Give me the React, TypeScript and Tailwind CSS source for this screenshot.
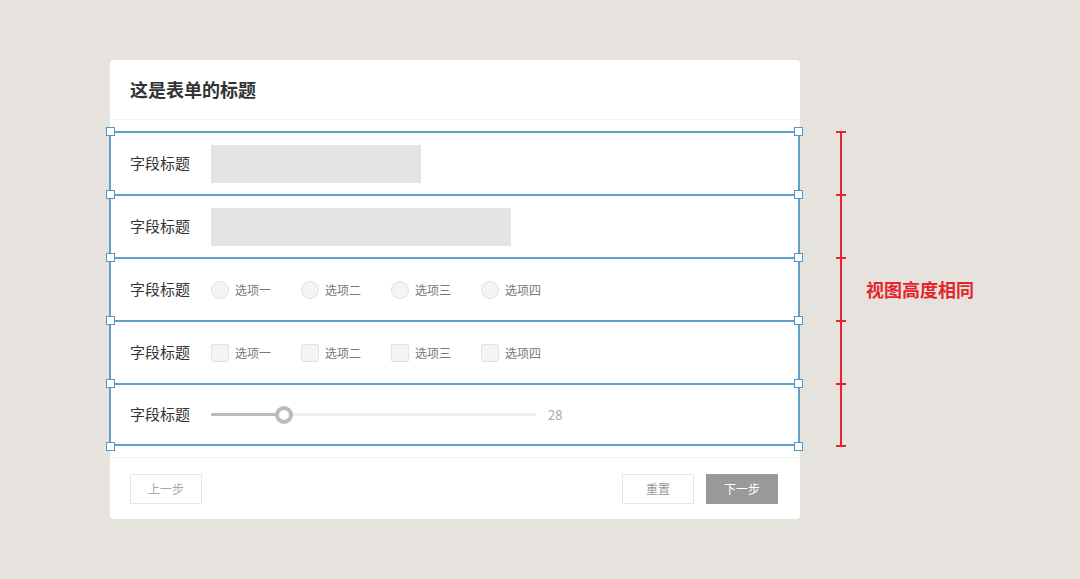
import React from "react";

const FONT = { fontFamily: '"Noto Sans CJK SC", "Noto Sans", sans-serif' };
const options = ["选项一", "选项二", "选项三", "选项四"];

function Label() {
  return <div className="w-[81px] shrink-0 text-[15px] text-[#333]">字段标题</div>;
}

function Row({ children, last }: { children: React.ReactNode; last?: boolean }) {
  return (
    <div
      className={
        "flex h-[63px] items-center border-t-2 border-[#5ea2cc] pl-[19px] " +
        (last ? "border-b-2" : "")
      }
    >
      {children}
    </div>
  );
}

function Handle({ top, left }: { top: number; left: boolean }) {
  return (
    <div
      className={
        "absolute h-[9px] w-[9px] border-[1.5px] border-[#4f97c6] bg-white " +
        (left ? "left-[-5px]" : "right-[-5px]")
      }
      style={{ top: top - 4 }}
    />
  );
}

export default function App() {
  const lines = [0, 63, 126, 189, 252, 315];
  return (
    <div className="flex h-[579px] w-[1080px] items-start bg-[#e6e3de]" style={FONT}>
      <div className="ml-[110px] mt-[60px] w-[690px] rounded-[4px] bg-white">
        <div className="flex h-[60px] items-center border-b border-[#f1f1f1] pl-[20px] text-[18px] font-bold text-[#333]">
          这是表单的标题
        </div>
        <div className="relative mt-[11px] border-x-2 border-[#5ea2cc] -ml-[1px]">
          <Row>
            <Label />
            <div className="h-[38px] w-[210px] bg-[#e4e4e4]" />
          </Row>
          <Row>
            <Label />
            <div className="h-[38px] w-[300px] bg-[#e4e4e4]" />
          </Row>
          <Row>
            <Label />
            {options.map((o) => (
              <div key={o} className="flex w-[90px] items-center">
                <div className="h-[18px] w-[18px] rounded-full border border-[#e2e2e2] bg-[#f4f4f4]" />
                <span className="ml-[6px] text-[12px] text-[#777]">{o}</span>
              </div>
            ))}
          </Row>
          <Row>
            <Label />
            {options.map((o) => (
              <div key={o} className="flex w-[90px] items-center">
                <div className="h-[18px] w-[18px] rounded-[2px] border border-[#e2e2e2] bg-[#f4f4f4]" />
                <span className="ml-[6px] text-[12px] text-[#777]">{o}</span>
              </div>
            ))}
          </Row>
          <Row last>
            <Label />
            <div className="relative flex h-[18px] w-[325px] items-center">
              <div className="h-[3px] w-full rounded-full bg-[#eeeeee]" />
              <div className="absolute left-0 h-[3px] w-[73px] rounded-full bg-[#bbbbbb]" />
              <div className="absolute left-[64px] h-[18px] w-[18px] rounded-full border-[4px] border-[#bbbbbb] bg-white" />
            </div>
            <span className="ml-[12px] text-[13px] text-[#aaa]">28</span>
          </Row>
          {lines.map((t) => (
            <React.Fragment key={t}>
              <Handle top={t} left />
              <Handle top={t} left={false} />
            </React.Fragment>
          ))}
        </div>
        <div className="mt-[11px] flex items-center justify-between border-t border-[#f3f3f3] pb-[15px] pl-[20px] pr-[22px] pt-[16px]">
          <button className="h-[30px] w-[72px] border border-[#e6e6e6] bg-white text-[12px] text-[#aaa]">
            上一步
          </button>
          <div className="flex gap-[12px]">
            <button className="h-[30px] w-[72px] border border-[#e6e6e6] bg-white text-[12px] text-[#999]">
              重置
            </button>
            <button className="h-[30px] w-[72px] bg-[#999999] text-[12px] text-white">下一步</button>
          </div>
        </div>
      </div>
      <div className="ml-[36px] mt-[131px] flex h-[316px] items-center">
        <div className="relative flex h-full w-[10px] justify-center">
          <div className="h-full w-[2px] bg-[#e3262d]" />
          {lines.map((t) => (
            <div
              key={t}
              className="absolute left-0 h-[2px] w-[10px] bg-[#e3262d]"
              style={{ top: Math.min(t, 314) }}
            />
          ))}
        </div>
        <div className="ml-[20px] text-[18px] font-bold text-[#e3262d]">视图高度相同</div>
      </div>
    </div>
  );
}
